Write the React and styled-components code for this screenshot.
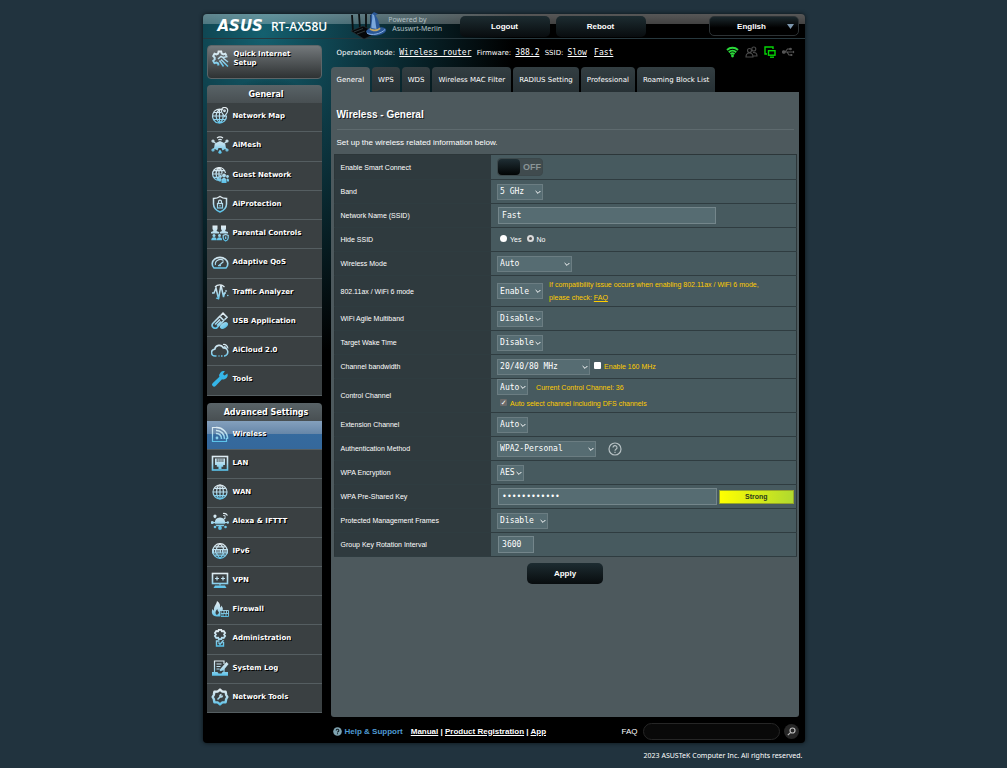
import React, { useState } from 'react'
import styled, { createGlobalStyle, css } from 'styled-components'

const GlobalStyle = createGlobalStyle`
  * { box-sizing: border-box; }
  body {
    margin: 0;
    background: #21333e;
    color: #fff;
    font-family: "Liberation Sans", Arial, sans-serif;
    font-size: 8px;
  }
  button, input, select { font: inherit; color: inherit; margin: 0; }
  a { color: inherit; }
`

const mono = css`
  font-family: "DejaVu Sans Mono", "Courier New", monospace;
`

const Page = styled.div`
  width: 94%;
  max-width: 602px;
  margin: 0 auto;
  padding-top: 14px;
`

const Frame = styled.div`
  border-radius: 4px;
  padding: 0 6px 0 4px;
  box-shadow: 0 0 4px #0a1216;
  background:
    linear-gradient(to bottom, rgba(255, 255, 255, 0.34), rgba(255, 255, 255, 0.26)) top / 100% 10px no-repeat,
    radial-gradient(circle at 66px 118px, #000a0d 0, rgba(0, 10, 13, 0) 56px),
    radial-gradient(ellipse at 60px 20px, #14606f 0, #0d3a45 90px, rgba(0, 0, 0, 0) 250px),
    #000;
`

const Header = styled.header`
  display: flex;
  align-items: center;
  height: 25px;
  margin: 0 -6px 0 -4px;
  padding: 0 6px 0 15px;
  border-bottom: 1px solid #27383e;
`

const Brand = styled.span`
  font: italic bold 15px "DejaVu Sans", sans-serif;
`

const Model = styled.h1`
  margin: 0 0 0 8px;
  font: 600 12px "Open Sans", "Noto Sans", sans-serif;
`

const MerlinLogo = styled.svg`
  flex: none;
  width: 38px;
  height: 28px;
  margin: -2px 0 0 22px;
`

const Powered = styled.p`
  margin: -5px 0 0 1px;
  color: #b3c0c4;
  font: 7px/9px "Noto Sans", sans-serif;
  white-space: nowrap;
  span { display: block; padding-left: 4px; }
`

const HeaderButtons = styled.div`
  display: flex;
  gap: 6px;
  margin-left: auto;
`

const DarkButton = styled.button`
  width: ${(p) => p.$width || 90}px;
  height: ${(p) => p.$height || 21}px;
  padding: 0;
  border: 0;
  border-radius: 5px;
  background: linear-gradient(#1d2c31, #080c0e);
  font-size: 8px;
  font-weight: bold;
  cursor: pointer;
`

const Language = styled.div`
  position: relative;
  margin-left: 63px;
  width: 90px;
  select {
    width: 100%;
    height: 20px;
    appearance: none;
    padding: 0 10px 0 6px;
    text-align-last: center;
    border: 1px solid #2c3235;
    border-radius: 5px;
    background: linear-gradient(#1b282d, #000 60%);
    font-weight: bold;
  }
  svg { position: absolute; right: 5px; top: 8px; pointer-events: none; }
`

const Body = styled.div`
  display: grid;
  grid-template-columns: 115px minmax(0, 1fr);
  column-gap: 9px;
`

const Sidebar = styled.nav`
  display: flex;
  flex-direction: column;
  padding: 6px 0 4px;
  font-family: Verdana, "DejaVu Sans", sans-serif;
  font-size: 7px;
  font-weight: bold;
  text-shadow: 1px 1px 0 #000;
`

const QuickSetup = styled.a`
  display: flex;
  align-items: flex-start;
  gap: 4px;
  height: 34px;
  margin-bottom: 6px;
  padding: 4px;
  border: 1px solid #5d6568;
  border-radius: 4px;
  background: linear-gradient(#73787b, #2e3233);
  line-height: 9px;
  text-decoration: none;
`

const MenuGroup = styled.section`
  flex: 1;
  display: flex;
  flex-direction: column;
  & + & { margin-top: 7px; }
`

const MenuTitle = styled.h2`
  margin: 0;
  height: 18px;
  padding-left: 4px;
  border-radius: 4px 4px 0 0;
  background: linear-gradient(#596367, #484f52);
  font-size: 8px;
  line-height: 20px;
  text-align: center;
`

const MenuItem = styled.a`
  flex: 1;
  display: flex;
  align-items: center;
  gap: 4px;
  min-height: 28px;
  padding: 0 4px 2px;
  border-bottom: 1px solid #555e61;
  background: ${(p) => (p.$active ? 'linear-gradient(#84a0bd, #6787a9 45%, #356a9e 46%, #35689b)' : '#3a4042')};
  text-decoration: none;
  white-space: nowrap;
`

const IconSvg = styled.svg`
  width: 18px;
  height: 18px;
  flex: none;
  fill: none;
  stroke: url(#sky);
  stroke-width: 1.2;
  .solid { fill: url(#sky); stroke: none; }
`

const Main = styled.main`
  min-width: 0;
`

const InfoLine = styled.div`
  display: flex;
  align-items: center;
  justify-content: space-between;
  height: 28px;
  padding: 0 4px 2px 6px;
  font-family: Verdana, "DejaVu Sans", sans-serif;
  font-size: 7px;
  p { margin: 0; white-space: nowrap; }
  a { ${mono} font-size: 8px; margin: 0 3px 0 2px; }
`

const StatusIcons = styled.div`
  display: flex;
  align-items: center;
  gap: 6px;
`

const Tabs = styled.div`
  display: flex;
  gap: 2px;
`

const Tab = styled.a`
  height: 25px;
  padding: 0 6px;
  border-radius: 4px 4px 0 0;
  background: ${(p) => (p.$active ? '#4d595d' : 'linear-gradient(#333e42, #273135)')};
  font: 7px/27px Verdana, "DejaVu Sans", sans-serif;
  text-decoration: none;
  white-space: nowrap;
`

const Panel = styled.div`
  min-height: 625px;
  padding: 15px 2px 10px 3px;
  border-radius: 0 0 3px 3px;
  background: #4d595d;
`

const Title = styled.h2`
  margin: 0 3px;
  padding-bottom: 6px;
  border-bottom: 1px solid #5e6a6e;
  font-size: 10px;
  line-height: 16px;
  text-shadow: 1px 1px 0 #1c2224;
`

const Intro = styled.p`
  margin: 8px 3px 6px;
  line-height: 10px;
`

const Settings = styled.table`
  width: 100%;
  border-collapse: collapse;
  border: 1px solid #2c3639;
  th, td { height: 24px; padding: 0 6px; border-bottom: 1px solid #2f3c40; }
  tr:first-child th, tr:first-child td { height: 25px; }
  th {
    width: 34%;
    background: #2f3a3e;
    font-size: 7px;
    font-weight: normal;
    text-align: left;
  }
  td { background: #475a5f; padding-right: 2px; }
`

const Inline = styled.div`
  display: flex;
  align-items: center;
  gap: ${(p) => p.$gap || 6}px;
`

const Toggle = styled.button`
  display: flex;
  align-items: center;
  gap: 3px;
  width: 46px;
  height: 18px;
  padding: 0;
  border: 1px solid #3c484b;
  border-radius: 4px;
  background: #404b4e;
  color: #8b9596;
  font-size: 9px;
  font-weight: bold;
  &::before {
    content: '';
    width: 22px;
    height: 16px;
    border-radius: 4px;
    background: linear-gradient(#1f2e34, #020404);
  }
`

const SelectWrap = styled.span`
  position: relative;
  display: inline-flex;
  vertical-align: middle;
  width: ${(p) => p.$width}px;
  select {
    ${mono}
    width: 100%;
    height: 16px;
    appearance: none;
    padding: 0 0 0 2px;
    border: 1px solid #6b7d82;
    border-radius: 0;
    background: #566c72;
  }
  svg { position: absolute; right: 2px; top: 6px; pointer-events: none; }
`

const TextInput = styled.input`
  ${mono}
  width: ${(p) => p.$width}px;
  height: 17px;
  margin-left: 1px;
  padding: 0 3px;
  border: 1px solid #74868b;
  background: #566c72;
  vertical-align: middle;
`

const Radio = styled.input`
  appearance: none;
  width: 7px;
  height: 7px;
  margin: 0 3px 0 3px;
  border-radius: 50%;
  background: #fff;
  &:checked { border: 2px solid #dadada; background: #555; }
`

const Check = styled.input`
  appearance: none;
  display: inline-grid;
  place-items: center;
  width: 7px;
  height: 7px;
  margin: 0 3px 3px 0;
  border-radius: 1px;
  background: #fff;
  vertical-align: middle;
  &:checked { background: #6a6a6a; }
  &:checked::before { content: '✓'; color: #fff; font: bold 7px "DejaVu Sans", sans-serif; }
`

const Hint = styled.span`
  color: #fc0;
  font-size: 7px;
  line-height: 13px;
`

const Plain = styled.span`
  color: #fff;
`

const AxLine = styled(Inline)`
  min-height: 30px;
`

const DfsLine = styled(Hint)`
  display: block;
  padding: 1px 0 1px 3px;
  line-height: 15px;
`

const Strength = styled.span`
  flex: 1;
  height: 14px;
  margin-left: 1px;
  border: 1px solid #95a52a;
  background: linear-gradient(to right, #ff0, #b0d92f);
  color: #2b3a1c;
  font-weight: bold;
  font-size: 7px;
  line-height: 12px;
  text-align: center;
`

const ApplyRow = styled.div`
  display: flex;
  justify-content: center;
  padding-top: 6px;
`

const Footer = styled.footer`
  display: flex;
  align-items: center;
  height: 26px;
  padding: 2px 0 0 126px;
  font-weight: bold;
  white-space: nowrap;
  form { display: flex; align-items: center; margin-left: auto; font-weight: normal; }
`

const HelpText = styled.span`
  margin: 0 8px 0 3px;
  color: #4f9bd3;
`

const FaqInput = styled.input`
  width: 137px;
  height: 17px;
  margin: 0 4px 0 5px;
  border: 1px solid #262626;
  border-radius: 9px;
  background: #090909;
`

const SearchButton = styled.button`
  display: grid;
  place-items: center;
  width: 15px;
  height: 15px;
  padding: 0;
  border: 0;
  border-radius: 50%;
  background: #262626;
`

const Copyright = styled.p`
  margin: 0;
  padding: 7px 2px 0 0;
  font: 7px/12px "Noto Sans", Verdana, sans-serif;
  text-align: right;
`

const globe = (
  <>
    <circle cx="9" cy="9" r="7" />
    <ellipse cx="9" cy="9" rx="3.4" ry="7" />
    <path d="M9 2v14M2 9h14M3.3 5.3h11.4M3.3 12.7h11.4" />
  </>
)

const icons = {
  quick: (
    <>
      <path strokeWidth="2" d="M6.500 15.500l-.4-2-1.600-.9-2 .5-1.300-2.200 1.500-1.500V7.600L1.200 6.100 2.500 3.800l2 .6 1.600-.9.500-2h2.600l.5 2 1.600.9 2-.6 1.200 2" />
      <path strokeWidth="1.500" d="M6 9l3-2.500 2 1 4.500-1M9 9.500l7 7M11 8l5 4M7.500 10.500l4 6" />
    </>
  ),
  map: (
    <>
      <path d="M12 3A7 7 0 1 0 15.500 8.500M8.500 2.500c-5 4-4 10 0 13.500 3-2 4-5 3.500-8M8.500 2.500V16M1.500 9h14M3 5.500h7M3 12.500h11" />
      <path d="M13.500 9.500c-2-3-3.200-4-3.200-5.800a3.200 3.200 0 0 1 6.400 0c0 1.800-1.200 2.800-3.200 5.800z" />
      <circle cx="13.500" cy="3.800" r=".8" />
    </>
  ),
  mesh: (
    <>
      <path className="solid" d="M3 12.500l.8-5L9 5l5.200 2.500.8 5-3.500 2-1-2.500h-3l-1 2.500z" />
      <path d="M6 2c2-1.600 4-1.600 6 0M7.300 3.900c1.200-.9 2.200-.9 3.400 0M4.500 7 2 5.500M13.500 7 16 5.500M4 12l-2 1.500M14 12l2 1.500M9 14v2" />
      <circle cx="2" cy="5" r="1" /><circle cx="16" cy="5" r="1" />
      <circle cx="2" cy="14" r="1" /><circle cx="16" cy="14" r="1" />
      <circle className="solid" cx="9" cy="16.200" r="1.600" />
    </>
  ),
  guest: (
    <>
      <path d="M14.500 7A6.500 6.500 0 1 0 8 14.500M8 1.500c-4 3-4 9 0 13M8 1.500c2.500 2 3.200 4 3 6M8 1.500v13M1.500 8H11M2.500 4.700h11M2.500 11.300H8" />
      <circle className="solid" cx="13" cy="9.500" r="1.900" /><path className="solid" d="M10.500 17v-3.500q2.500-3.500 5 0V17z" />
      <circle className="solid" cx="9.500" cy="10.500" r="1.400" /><path className="solid" d="M7.800 15.500v-2q1.500-2.500 2.500-.5v2.500z" />
      <circle className="solid" cx="16.500" cy="10.500" r="1.400" /><path className="solid" d="M16 15.500v-3q2.500 0 2 3z" />
    </>
  ),
  shield: (
    <>
      <path strokeWidth="1.500" d="M9 1.500c2 1.500 4 2 6.500 2V9c0 4-3 6.500-6.500 8-3.500-1.500-6.500-4-6.500-8V3.500c2.500 0 4.500-.5 6.500-2z" />
      <rect x="6.500" y="8.500" width="5" height="4.500" /><path d="M7.500 8.500V6.700a1.500 1.500 0 0 1 3 0v1.800M9 10v1.500" />
    </>
  ),
  family: (
    <>
      <path className="solid" d="M1.500 1.500h5V5L5.500 7 8 8v1.500H0V8l2.500-1-1-2z" />
      <path className="solid" d="M10 1.500h5V5l-1 2 3 1v1.500H8.800V8L11 7l-1-2z" />
      <circle className="solid" cx="3" cy="11.500" r="1.500" /><path className="solid" d="M.3 16.200q0-3 2.700-3t2.700 3z" />
      <circle className="solid" cx="8.500" cy="11.500" r="1.500" /><path className="solid" d="M5.900 16.200q0-3 2.600-3t2.600 3z" />
      <path d="M14.700 10.500l2.500 1v2.500q0 2-2.500 3-2.500-1-2.500-3v-2.500zM14.700 12.500v2.500" />
    </>
  ),
  gauge: (
    <>
      <path strokeWidth="1.600" d="M3 15a7.800 6.500 0 1 1 12 0z" />
      <path d="M4.500 12a5 4.500 0 0 1 8-4.500M8 12.500l4.500-4M7 12.700h3" />
    </>
  ),
  traffic: (
    <>
      <path strokeWidth="1.500" d="M1 10h2l2-5 2.500 11L10 2l2.500 12 1-4H15" />
      <path d="M4 4a6.500 6.500 0 0 1 9.500 0M15 7v2M5 15l3 1" />
      <circle className="solid" cx="16.800" cy="12.500" r=".8" />
    </>
  ),
  usb: (
    <>
      <path strokeWidth="1.600" d="M1.700 11.500l7-7 4 4-6.500 7q-2 1.500-4 0t-.5-4zM9.500 3.700L12 1.200l4 4-2.500 2.500M4 12.500l5-5M6 13.500l4-4" />
      <ellipse className="solid" cx="13" cy="13.500" rx="4.500" ry="2.600" transform="rotate(-35 13 13.500)" />
    </>
  ),
  cloud: (
    <>
      <path strokeWidth="1.600" d="M5.500 15H4a3.400 3.400 0 0 1-.2-6.800 4.500 4.500 0 0 1 8.500-1.300 4.100 4.100 0 0 1 1.200 8.100H13M7.500 15h1M10 15h1.500" />
      <path d="M12 3.500c2.500-.5 4.500 1 5 4M12.800 5.500c1.500 0 2.400 1 2.700 2.500" />
    </>
  ),
  wrench: (
    <path fill="#35b6e9" stroke="none" d="M16.500 3.500l-3 2-1.600-1.600 2-2.700a4.500 4.500 0 0 0-5.500 5.600L1.600 13.200a2 2 0 0 0 3 2.800L11 9.300a4.500 4.500 0 0 0 5.500-5.800z" />
  ),
  wireless: (
    <>
      <path d="M5 2.500H1.500v14h14V13" />
      <circle className="solid" cx="6" cy="13" r="1.400" />
      <path strokeWidth="1.600" d="M5 8.500a5 5 0 0 1 5.500 5.500M5 5.500a8 8 0 0 1 8.500 8.500M5 2.500A11 11 0 0 1 16.500 14" />
    </>
  ),
  lan: (
    <>
      <rect strokeWidth="1.600" x="1.500" y="2.500" width="15" height="13.500" />
      <path className="solid" d="M4 4.500h10V11h-1.800v1.800H10.500V15h-3v-2.200H5.800V11H4z" />
      <path stroke="#3a4042" strokeWidth=".8" d="M6.200 4.500V8M8.100 4.500V8M10 4.500V8M11.900 4.500V8" />
    </>
  ),
  wan: globe,
  alexa: (
    <>
      <path className="solid" d="M3.700 11.800q0-6.300 5.300-6.300t5.300 6.300z" /><path className="solid" d="M4.500 12.700h9l-1 1.500h-7z" />
      <path d="M4.500 6 3 4.500M13 7l1.500-1.500M2 10.500h2M14 10.500h2M9 14v1.500M12 1.500q3-.5 4.500 2M12.300 3.500q1.500 0 2.200 1" />
      <circle className="solid" cx="4" cy="4" r="1.600" />
      <circle className="solid" cx="1.300" cy="10.500" r="1.600" /><circle className="solid" cx="16.800" cy="10.500" r="1.200" />
      <circle className="solid" cx="9" cy="16" r="1.900" /><circle className="solid" cx="4" cy="15" r="1.300" /><circle className="solid" cx="14.500" cy="15" r="1.300" />
    </>
  ),
  ipv6: (
    <>
      <circle cx="9" cy="9" r="7.300" /><path d="M9 1.700c-5 4-5 10 0 14.600 5-4.600 5-10.600 0-14.600zM3.500 4.800h11M3.500 13.200h11" />
      <path className="solid" d="M1 7h16v4.500H1z" /><path stroke="#3a4042" d="M3.500 8v2.500M6 8v2.500M8 8v2.500M10.500 8v2.500M13 8v2.500M15 8v2.500" strokeWidth=".8" />
    </>
  ),
  vpn: (
    <>
      <rect x="1.500" y="2.500" width="15" height="10" strokeWidth="1.600" />
      <path d="M4 7.500h4M6 5.500v4M10 7.500h4M12 5.500v4M9 12.500v2" /><path className="solid" d="M4 14.500h10l1.500 2.500h-13z" />
    </>
  ),
  firewall: (
    <>
      <path className="solid" d="M6 16.500C1 16.500 0 12.500 1.500 9c.5 1 1 1.500 1.500 1.500C2.500 6 5.500 5 6 1c3 2 3.500 4.500 3 6.500 1-.3 1.200-1 1.200-2C12.500 8 12 10 11 11H9v5.500z" />
      <path fill="#3a4042" stroke="none" d="M6 15c-2-1-2-3.500.3-6 0 2 1.800 2.500 1.700 4z" />
      <path strokeWidth=".9" d="M10 10.500h7.500V16.500H10zM10 13.500h7.500M13 10.500v3M15 13.500v3M12 13.500v3M15.500 10.500v3" />
    </>
  ),
  admin: (
    <>
      <path strokeWidth="1.800" d="M7.700.9h2.600l.5 1.400 1.900-.3 1.400 2.100-1 1.400 1 1.400-1.400 2.100-1.900-.3-.5 1.400H7.700l-.5-1.400-1.900.3-1.400-2.100 1-1.400-1-1.400 1.400-2.100 1.900.3z" />
      <path strokeWidth="1.400" d="M12.500 13v4h-7v-5h3M7.500 13.500l1.500 1.800 3.500-4" />
    </>
  ),
  log: (
    <>
      <path d="M3.500 13V2H13v3M13 9.500V13" /><path d="M5.500 5h5M5.500 7.500h4M5.500 10h3" /><path strokeWidth="1.600" d="M9 11.500l7-8M9 11.500l3-1 5-6" />
      <path className="solid" d="M1 13h5.500l1 1.500h3l1-1.500H17v3.700H1z" />
    </>
  ),
  tools: (
    <>
      <path strokeWidth="2.400" strokeLinejoin="round" d="M9 1.600l2.400 2 3.200.200.600 3.200L16.400 9l-1.200 2-.600 3.200-3.200.200L9 16.400l-2.400-2-3.200-.200-.600-3.200L1.600 9l1.200-2 .600-3.200 3.200-.200z" />
      <path strokeWidth="1.500" d="M6.500 11.500L9 9M9 9q-.5-2 1.500-2.500M9 9q2 .5 2.500-1.500" />
    </>
  ),
}

const MenuIcon = ({ name }) => (
  <IconSvg viewBox="0 0 18 18" aria-hidden="true">{icons[name]}</IconSvg>
)

const generalMenu = [
  ['map', 'Network Map'],
  ['mesh', 'AiMesh'],
  ['guest', 'Guest Network'],
  ['shield', 'AiProtection'],
  ['family', 'Parental Controls'],
  ['gauge', 'Adaptive QoS'],
  ['traffic', 'Traffic Analyzer'],
  ['usb', 'USB Application'],
  ['cloud', 'AiCloud 2.0'],
  ['wrench', 'Tools'],
]

const advancedMenu = [
  ['wireless', 'Wireless'],
  ['lan', 'LAN'],
  ['wan', 'WAN'],
  ['alexa', 'Alexa & IFTTT'],
  ['ipv6', 'IPv6'],
  ['vpn', 'VPN'],
  ['firewall', 'Firewall'],
  ['admin', 'Administration'],
  ['log', 'System Log'],
  ['tools', 'Network Tools'],
]

const tabs = ['General', 'WPS', 'WDS', 'Wireless MAC Filter', 'RADIUS Setting', 'Professional', 'Roaming Block List']

const Menu = ({ title, items, active }) => (
  <MenuGroup>
    <MenuTitle>{title}</MenuTitle>
    {items.map(([icon, label]) => (
      <MenuItem key={label} href="#" $active={label === active}>
        <MenuIcon name={icon} />
        {label}
      </MenuItem>
    ))}
  </MenuGroup>
)

const Select = ({ id, width, value }) => (
  <SelectWrap $width={width}>
    <select id={id} defaultValue={value}>
      <option>{value}</option>
    </select>
    <svg width="6" height="5" viewBox="0 0 6 5" fill="none" stroke="#fff" strokeWidth="1">
      <path d="M.6 1l2.400 2.400L5.400 1" />
    </svg>
  </SelectWrap>
)

const Row = ({ label, id, children }) => (
  <tr>
    <th scope="row">{id ? <label htmlFor={id}>{label}</label> : label}</th>
    <td>{children}</td>
  </tr>
)

const Merlin = () => (
  <MerlinLogo viewBox="0 0 38 28" aria-hidden="true">
    <path d="M3 4l1 16M10 3l1 15M17 3v14M22 4v12" stroke="#0c1011" strokeWidth="1.800" />
    <path d="M2 20l12-5 14 7-13 6z" fill="#06080a" stroke="#2b3235" strokeWidth=".6" />
    <path d="M5 21l9-3.500M8 23l8-3" stroke="#3a4448" strokeWidth=".8" />
    <path d="M17 21c0-2 2-3 4-4 1-5 0-9 .500-13L25 1l4 2-2.500 1.200c3 4 3.500 8 4.500 12 4 0 7 1.500 6 3.500-2 5-17 7-20 1.300z" fill="#2a5796" />
    <path d="M23 3c1 5-1 10-.5 14l5 1c-1-5-1-10-2.500-14z" fill="#7ba8dc" />
    <path d="M21 17c3 2.200 7 1.800 10-.5l.5 1.500c-3 3-8 3-11 .5z" fill="#c3a763" />
    <path d="M18 22c4 3 14 1 18-3.500" stroke="#8db4e4" strokeWidth="1" fill="none" />
  </MerlinLogo>
)

const App = () => {
  const [smart, setSmart] = useState(false)

  return (
    <>
      <GlobalStyle />
      <svg width="0" height="0" style={{ position: 'absolute' }} aria-hidden="true">
        <linearGradient id="sky" gradientUnits="userSpaceOnUse" x1="0" y1="1" x2="0" y2="17">
          <stop offset="0" stopColor="#e6eef2" />
          <stop offset=".5" stopColor="#b5dced" />
          <stop offset="1" stopColor="#55c1ea" />
        </linearGradient>
      </svg>
      <Page>
        <Frame>
          <Header>
            <Brand>ASUS</Brand>
            <Model>RT-AX58U</Model>
            <Merlin />
            <Powered>Powered by<span>Asuswrt-Merlin</span></Powered>
            <HeaderButtons>
              <DarkButton type="button">Logout</DarkButton>
              <DarkButton type="button">Reboot</DarkButton>
            </HeaderButtons>
            <Language>
              <select aria-label="Language" defaultValue="English">
                <option>English</option>
              </select>
              <svg width="7" height="5" viewBox="0 0 7 5"><path d="M0 0h7L3.500 5z" fill="#7d97ad" /></svg>
            </Language>
          </Header>

          <Body>
            <Sidebar>
              <QuickSetup href="#">
                <MenuIcon name="quick" />
                <span>Quick Internet<br />Setup</span>
              </QuickSetup>
              <Menu title="General" items={generalMenu} />
              <Menu title="Advanced Settings" items={advancedMenu} active="Wireless" />
            </Sidebar>

            <Main>
              <InfoLine>
                <p>
                  Operation Mode: <a href="#">Wireless router</a> Firmware: <a href="#">388.2</a> SSID: <a href="#">Slow</a> <a href="#">Fast</a>
                </p>
                <StatusIcons>
                  <svg width="13" height="12" viewBox="0 0 13 12" fill="none" stroke="#2bd93a" strokeWidth="1.900">
                    <path d="M1 4a8 8 0 0 1 11 0M2.800 6.200a5.500 5.500 0 0 1 7.400 0M4.500 8.200a3 3 0 0 1 4 0" />
                    <circle cx="6.500" cy="10" r="1.400" fill="#2bd93a" stroke="none" />
                  </svg>
                  <svg width="13" height="12" viewBox="0 0 13 12" fill="none" stroke="#4b4b4b" strokeWidth="1.100">
                    <circle cx="4.500" cy="4.500" r="2" /><circle cx="8.800" cy="3" r="2" />
                    <path d="M1 11q0-4 3.500-4T8 11zM8 6.500q4-.5 4 3.500H8.500" />
                  </svg>
                  <svg width="12" height="12" viewBox="0 0 12 12" fill="none" stroke="#05d305" strokeWidth="1.400">
                    <path d="M3 8H1V1h8v2" /><rect x="4.500" y="4.700" width="6.500" height="4.500" /><path d="M6 11.200h4" />
                  </svg>
                  <svg width="13" height="12" viewBox="0 0 13 12" fill="none" stroke="#555" strokeWidth="1.100">
                    <path d="M1 6h11M3 6l2.500-3H8M5 6l2 3h2" />
                    <circle cx="1.800" cy="6" r="1.300" fill="#555" /><circle cx="8.500" cy="3" r=".8" fill="#555" /><path d="M8.500 8h1.800v2H8.500zM11 4.500L12.500 6 11 7.500z" fill="#555" stroke="none" />
                  </svg>
                </StatusIcons>
              </InfoLine>

              <Tabs>
                {tabs.map((t, i) => <Tab key={t} href="#" $active={i === 0}>{t}</Tab>)}
              </Tabs>

              <Panel>
                <Title>Wireless - General</Title>
                <Intro>Set up the wireless related information below.</Intro>
                <Settings>
                  <tbody>
                    <Row label="Enable Smart Connect" id="smart">
                      <Toggle id="smart" type="button" aria-pressed={smart} onClick={() => setSmart(!smart)}>
                        {smart ? 'ON' : 'OFF'}
                      </Toggle>
                    </Row>
                    <Row label="Band" id="band"><Select id="band" width={46} value="5 GHz" /></Row>
                    <Row label="Network Name (SSID)" id="ssid">
                      <TextInput id="ssid" type="text" $width={218} defaultValue="Fast" />
                    </Row>
                    <Row label="Hide SSID">
                      <Inline $gap={2}>
                        <Hint as="label"><Radio type="radio" name="hide" /><Plain>Yes</Plain></Hint>
                        <Hint as="label"><Radio type="radio" name="hide" defaultChecked /><Plain>No</Plain></Hint>
                      </Inline>
                    </Row>
                    <Row label="Wireless Mode" id="mode"><Select id="mode" width={75} value="Auto" /></Row>
                    <Row label="802.11ax / WiFi 6 mode" id="ax">
                      <AxLine>
                        <Select id="ax" width={46} value="Enable" />
                        <Hint>
                          If compatibility issue occurs when enabling 802.11ax / WiFi 6 mode,<br />
                          please check: <a href="#">FAQ</a>
                        </Hint>
                      </AxLine>
                    </Row>
                    <Row label="WiFi Agile Multiband" id="agile"><Select id="agile" width={46} value="Disable" /></Row>
                    <Row label="Target Wake Time" id="twt"><Select id="twt" width={46} value="Disable" /></Row>
                    <Row label="Channel bandwidth" id="bw">
                      <Inline $gap={4}>
                        <Select id="bw" width={93} value="20/40/80 MHz" />
                        <Hint as="label"><Check type="checkbox" />Enable 160 MHz</Hint>
                      </Inline>
                    </Row>
                    <Row label="Control Channel" id="channel">
                      <Inline $gap={8}>
                        <Select id="channel" width={31} value="Auto" />
                        <Hint>Current Control Channel: 36</Hint>
                      </Inline>
                      <DfsLine as="label"><Check type="checkbox" defaultChecked />Auto select channel including DFS channels</DfsLine>
                    </Row>
                    <Row label="Extension Channel" id="ext"><Select id="ext" width={31} value="Auto" /></Row>
                    <Row label="Authentication Method" id="auth">
                      <Inline $gap={12}>
                        <Select id="auth" width={99} value="WPA2-Personal" />
                        <svg width="14" height="14" viewBox="0 0 14 14" fill="none" stroke="#b6c0c3" strokeWidth="1.200">
                          <circle cx="7" cy="7" r="6" />
                          <path d="M5 5.600a2 2 0 1 1 3 1.700q-1 .6-1 1.500M7 9.800v1.200" />
                        </svg>
                      </Inline>
                    </Row>
                    <Row label="WPA Encryption" id="enc"><Select id="enc" width={27} value="AES" /></Row>
                    <Row label="WPA Pre-Shared Key" id="psk">
                      <Inline $gap={1}>
                        <TextInput id="psk" type="password" $width={219} defaultValue="abcdefghijkl" />
                        <Strength>Strong</Strength>
                      </Inline>
                    </Row>
                    <Row label="Protected Management Frames" id="pmf"><Select id="pmf" width={51} value="Disable" /></Row>
                    <Row label="Group Key Rotation Interval" id="gkey">
                      <TextInput id="gkey" type="text" $width={36} defaultValue="3600" />
                    </Row>
                  </tbody>
                </Settings>
                <ApplyRow><DarkButton type="button" $width={76}>Apply</DarkButton></ApplyRow>
              </Panel>
            </Main>
          </Body>

          <Footer>
            <svg width="9" height="9" viewBox="0 0 9 9">
              <circle cx="4.500" cy="4.500" r="4.300" fill="#7fa3b0" />
              <path d="M3.200 3.500a1.300 1.300 0 1 1 2 1.100q-.7.4-.7 1M4.500 6.300v1" fill="none" stroke="#0d1a20" strokeWidth="1.100" />
            </svg>
            <HelpText>Help & Support</HelpText>
            <span><a href="#">Manual</a> | <a href="#">Product Registration</a> | <a href="#">App</a></span>
            <form>
              <label htmlFor="faq">FAQ</label>
              <FaqInput id="faq" type="text" />
              <SearchButton type="button" aria-label="Search">
                <svg width="9" height="9" viewBox="0 0 9 9" fill="none" stroke="#bbb" strokeWidth="1.200">
                  <circle cx="5.500" cy="3.500" r="2.500" /><path d="M3.700 5.300L.8 8.200" />
                </svg>
              </SearchButton>
            </form>
          </Footer>
        </Frame>
        <Copyright>2023 ASUSTeK Computer Inc. All rights reserved.</Copyright>
      </Page>
    </>
  )
}

export default App
